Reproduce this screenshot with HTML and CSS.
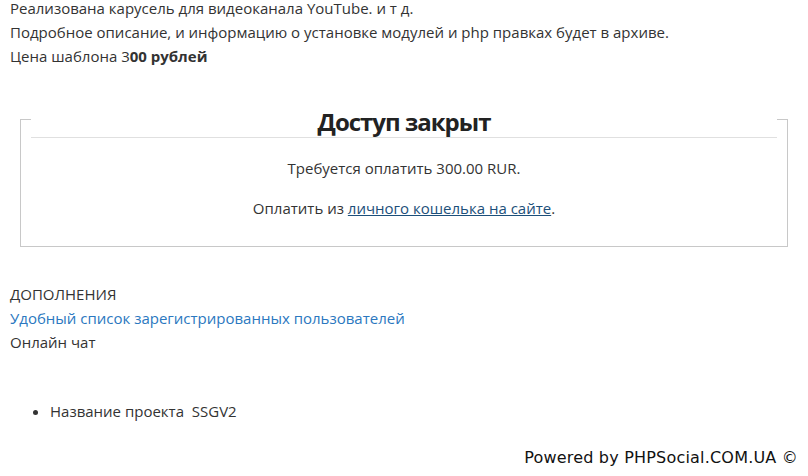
FILE: index.html
```html
<!DOCTYPE html>
<html lang="ru">
<head>
<meta charset="utf-8">
<title>SSGV2</title>
<link rel="stylesheet" href="styles.css">
</head>
<body>
<div class="page">
  <div class="intro">
    <div>Реализована карусель для видеоканала YouTube. и т д.</div>
    <div>Подробное описание, и информацию о установке модулей и php правках будет в архиве.</div>
    <div>Цена шаблона 3<b>00 рублей</b></div>
  </div>

  <fieldset class="locked">
    <legend class="locked-legend"><h2 class="locked-title">Доступ закрыт</h2></legend>
    <p class="locked-text">Требуется оплатить 300.00 RUR.</p>
    <p class="locked-text">Оплатить из <a class="wallet-link" href="#">личного кошелька на сайте</a>.</p>
  </fieldset>

  <div class="addons">
    <div>ДОПОЛНЕНИЯ</div>
    <div><a class="addon-link" href="#">Удобный список зарегистрированных пользователей</a></div>
    <div>Онлайн чат</div>
  </div>

  <ul class="meta">
    <li>Название проекта&nbsp; SSGV2</li>
  </ul>

  <div class="powered">Powered by PHPSocial.COM.UA ©</div>
</div>
</body>
</html>
```
FILE: styles.css
```css
html, body {
  margin: 0;
  padding: 0;
  background: #fff;
}
body {
  font-family: "Open Sans", "Noto Sans", sans-serif;
  font-size: 15px;
  line-height: 24px;
  color: #333;
}
.page {
  margin-top: -4px;
  padding: 0 10px;
}
.intro b {
  font-weight: 700;
}
.locked {
  margin: 32px 10px 0;
  padding: 0 10px 26px;
  border: 1px solid #c8c8c8;
  min-width: 0;
}
.locked-legend {
  width: 100%;
  padding: 7px 0 0;
}
.locked-title {
  margin: 0;
  font-size: 24px;
  line-height: 30px;
  font-weight: 700;
  color: #222;
  text-align: center;
  letter-spacing: -1px;
  border-bottom: 1px solid #e0e0e0;
  padding: 0;
}
.locked-text {
  margin: 18px 0 0;
  text-align: center;
  font-size: 15px;
  color: #333;
}
.locked-text + .locked-text {
  margin-top: 16px;
}
.wallet-link {
  color: #1c4f7a;
  text-decoration: underline;
}
.addons {
  margin-top: 35px;
}
.addon-link {
  color: #2b78c0;
  text-decoration: none;
}
.meta {
  margin: 45px 0 0;
  padding-left: 40px;
}
.powered {
  margin-top: 23px;
  text-align: right;
  font-family: "DejaVu Sans", Verdana, sans-serif;
  font-size: 16px;
  letter-spacing: 0.2px;
  color: #111;
}
```
